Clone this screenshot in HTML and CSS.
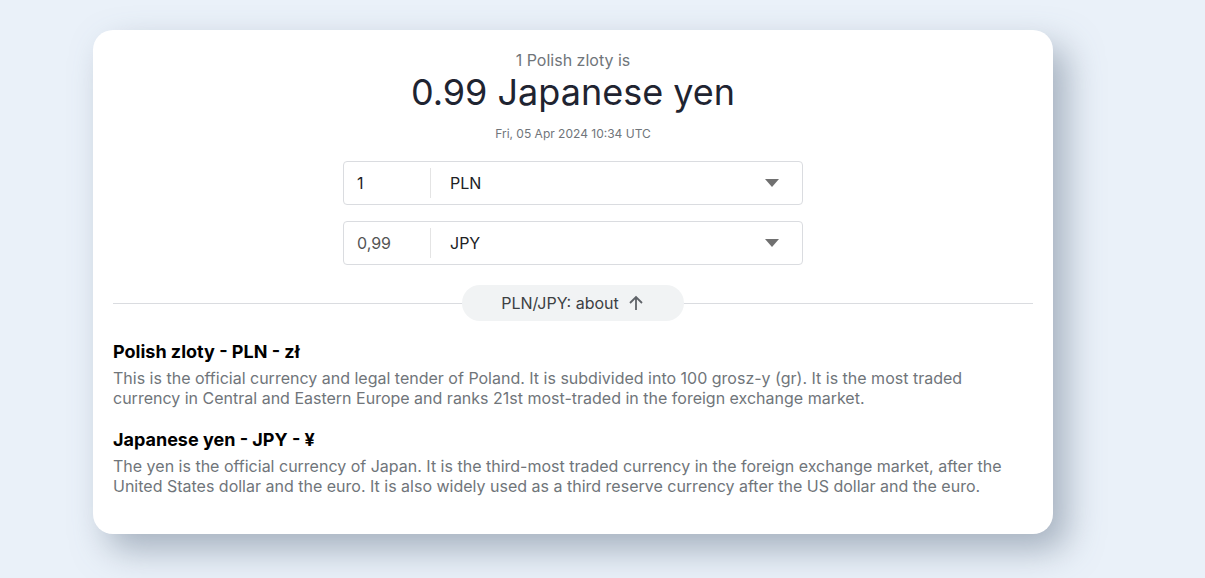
FILE: index.html
```html
<!DOCTYPE html>
<html>
<head>
<meta charset="utf-8">
<link rel="stylesheet" href="styles.css">
</head>
<body>
<div class="page">
  <div class="card">
    <div class="summary">
      <div class="sub">1 Polish zloty is</div>
      <div class="result">0.99 Japanese yen</div>
      <div class="date">Fri, 05 Apr 2024 10:34 UTC</div>
    </div>
    <div class="form">
      <div class="field">
        <div class="amount">1</div>
        <div class="sep"></div>
        <div class="cur">PLN</div>
        <svg class="caret" width="14" height="8" viewBox="0 0 14 8"><path d="M0 0H14L7 8Z" fill="#707070"/></svg>
      </div>
      <div class="field">
        <div class="amount light">0,99</div>
        <div class="sep"></div>
        <div class="cur">JPY</div>
        <svg class="caret" width="14" height="8" viewBox="0 0 14 8"><path d="M0 0H14L7 8Z" fill="#707070"/></svg>
      </div>
    </div>
    <div class="divider">
      <div class="pill">PLN/JPY: about
        <svg width="18" height="18" viewBox="0 0 18 18"><path d="M9 16V3M3 9L9 3L15 9" fill="none" stroke="#5f6368" stroke-width="1.8"/></svg>
      </div>
    </div>
    <div class="info">
      <h3>Polish zloty - PLN - zł</h3>
      <p>This is the official currency and legal tender of Poland. It is subdivided into 100 grosz-y (gr). It is the most traded currency in Central and Eastern Europe and ranks 21st most-traded in the foreign exchange market.</p>
      <h3 class="second">Japanese yen - JPY - ¥</h3>
      <p>The yen is the official currency of Japan. It is the third-most traded currency in the foreign exchange market, after the United States dollar and the euro. It is also widely used as a third reserve currency after the US dollar and the euro.</p>
    </div>
  </div>
</div>
</body>
</html>
```

FILE: styles.css
```css
html, body {
  margin: 0;
  padding: 0;
  background: #eaf1f9;
  font-family: Inter, "Noto Sans", sans-serif;
}
.page {
  padding: 30px 0 0 93px;
  height: 548px;
  box-sizing: content-box;
}
.card {
  width: 960px;
  box-sizing: border-box;
  background: #fff;
  border-radius: 20px;
  padding: 18px 20px 38px;
  box-shadow: 14px 16px 34px rgba(100, 115, 135, 0.5);
}
.summary {
  text-align: center;
}
.sub {
  font-size: 16px;
  line-height: 24px;
  color: #70757a;
}
.result {
  font-size: 36px;
  line-height: 40px;
  color: #1f2431;
}
.date {
  margin-top: 14px;
  font-size: 12px;
  line-height: 16px;
  color: #70757a;
}
.form {
  margin-top: 19px;
  display: flex;
  flex-direction: column;
  align-items: center;
  gap: 16px;
}
.field {
  width: 460px;
  height: 44px;
  box-sizing: border-box;
  border: 1px solid #dadce0;
  border-radius: 4px;
  display: flex;
  align-items: center;
  font-size: 16px;
  color: #202124;
}
.amount {
  width: 86px;
  padding-left: 13px;
  box-sizing: border-box;
}
.amount.light {
  color: #555;
}
.sep {
  width: 1px;
  height: 30px;
  background: #e4e4e4;
}
.cur {
  flex: 1;
  padding-left: 19px;
}
.caret {
  margin-right: 23px;
}
.divider {
  margin-top: 20px;
  height: 36px;
  display: flex;
  justify-content: center;
  align-items: center;
  background: linear-gradient(#dadce0, #dadce0) center / 100% 1px no-repeat;
}
.pill {
  width: 222px;
  height: 36px;
  box-sizing: border-box;
  border-radius: 18px;
  background: #f1f3f4;
  display: flex;
  align-items: center;
  justify-content: center;
  gap: 8px;
  font-size: 16px;
  color: #3c4043;
}
.info h3 {
  margin: 19px 0 0;
  font-size: 18px;
  line-height: 24px;
  font-weight: 700;
  color: #000;
}
.info h3.second {
  margin-top: 20px;
}
.info p {
  margin: 4px 0 0;
  font-size: 16px;
  line-height: 20px;
  color: #70757a;
}
```
